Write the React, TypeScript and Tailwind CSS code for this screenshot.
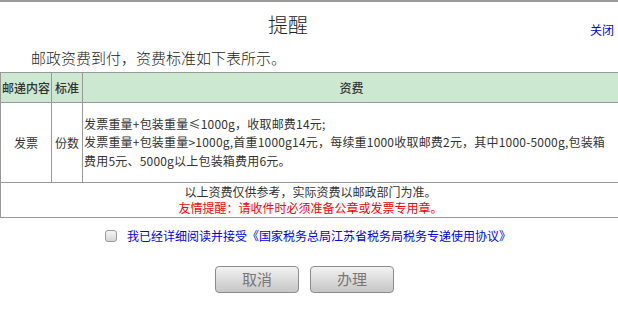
import React from 'react';

const font = { fontFamily: '"Noto Sans CJK SC", "Noto Sans", sans-serif' };

export default function App() {
    return (
        <div className="w-[618px] h-[317px] overflow-hidden bg-white border-t-2 border-[#999999] text-[#333333]" style={font}>
            {/* Header */}
            <div className="flex pt-[10px]">
                <div className="w-[576px] text-center text-[20px] leading-[26px] font-light text-[#222222]">提醒</div>
                <div className="pl-[14px] pt-[11px] text-[12px] leading-[14px] text-[#0000ee] cursor-pointer">关闭</div>
            </div>

            <p className="mt-[10px] pl-[31px] text-[15px] leading-[20px] font-light text-[#222222]">
                邮政资费到付，资费标准如下表所示。
            </p>

            {/* Fee table */}
            <div className="mt-[4px] w-full overflow-hidden">
                <table className="w-[621px] border-collapse text-[12px] table-fixed">
                    <colgroup>
                        <col className="w-[51px]" />
                        <col className="w-[31px]" />
                        <col />
                    </colgroup>
                    <thead>
                        <tr className="bg-[#cde8d1] h-[30px]">
                            <th className="border border-[#999999] p-0 font-medium text-[#333333] whitespace-nowrap">邮递内容</th>
                            <th className="border border-[#999999] p-0 font-medium text-[#333333]">标准</th>
                            <th className="border border-[#999999] p-0 font-medium text-[#333333]">资费</th>
                        </tr>
                    </thead>
                    <tbody>
                        <tr className="h-[80px]">
                            <td className="border border-[#999999] p-0 text-center">发票</td>
                            <td className="border border-[#999999] p-0 text-center">份数</td>
                            <td className="border border-[#999999] py-0 pl-[1px] pr-0 text-left leading-[18.5px] tracking-[0.2px]">
                                发票重量+包装重量≤1000g，收取邮费14元;
                                <br />
                                发票重量+包装重量&gt;1000g,首重1000g14元，每续重1000收取邮费2元，其中1000-5000g,包装箱
                                <br />
                                费用5元、5000g以上包装箱费用6元。
                            </td>
                        </tr>
                        <tr className="h-[35px]">
                            <td colSpan={3} className="border border-[#999999] p-0 text-center leading-[16px]">
                                <div className="text-[#333333]">以上资费仅供参考，实际资费以邮政部门为准。</div>
                                <div className="text-[#ff0000]">友情提醒：请收件时必须准备公章或发票专用章。</div>
                            </td>
                        </tr>
                    </tbody>
                </table>
            </div>

            {/* Agreement */}
            <div className="mt-[10px] flex items-center justify-center gap-[10px] pr-[2px]">
                <div className="w-[12px] h-[12px] rounded-[3px] border border-[#9a9a9a] bg-gradient-to-b from-[#f6f6f6] to-[#d6d6d6]" />
                <span className="text-[12px] leading-[16px] text-[#0000ee]">
                    我已经详细阅读并接受《国家税务总局江苏省税务局税务专递使用协议》
                </span>
            </div>

            {/* Actions */}
            <div className="mt-[22px] flex justify-center gap-[11px] pr-[9px]">
                <button className="w-[84px] h-[27px] rounded-[4px] border border-[#8c8c8c] bg-gradient-to-b from-[#f2f2f2] to-[#c6c6c6] text-[15px] text-[#777777]">
                    取消
                </button>
                <button className="w-[84px] h-[27px] rounded-[4px] border border-[#8c8c8c] bg-gradient-to-b from-[#f2f2f2] to-[#c6c6c6] text-[15px] text-[#777777]">
                    办理
                </button>
            </div>
        </div>
    );
}
